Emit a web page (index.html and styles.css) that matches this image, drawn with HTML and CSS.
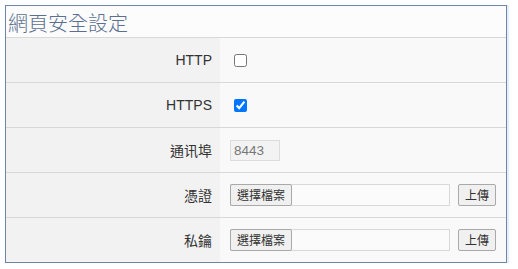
FILE: index.html
```html
<!DOCTYPE html>
<html>
<head>
<meta charset="utf-8">
<link rel="stylesheet" href="styles.css">
</head>
<body>
<div class="panel">
  <div class="title">網頁安全設定</div>
  <div class="row">
    <div class="label">HTTP</div>
    <div class="value"><input type="checkbox" class="chk"></div>
  </div>
  <div class="row">
    <div class="label">HTTPS</div>
    <div class="value"><input type="checkbox" class="chk" checked></div>
  </div>
  <div class="row">
    <div class="label">通讯埠</div>
    <div class="value"><div class="port">8443</div></div>
  </div>
  <div class="row">
    <div class="label">憑證</div>
    <div class="value">
      <div class="file"><span class="pick">選擇檔案</span></div>
      <span class="upload">上傳</span>
    </div>
  </div>
  <div class="row last">
    <div class="label">私鑰</div>
    <div class="value">
      <div class="file"><span class="pick">選擇檔案</span></div>
      <span class="upload">上傳</span>
    </div>
  </div>
</div>
</body>
</html>
```

FILE: styles.css
```css
html, body {
  margin: 0;
  padding: 0;
  background: #ffffff;
}
body {
  padding: 5px 0 0 5px;
  font-family: "Liberation Sans", Arial, "Noto Sans CJK TC", sans-serif;
  color: #333333;
}
.panel {
  width: 500px;
  border: 1px solid #6f87a6;
  box-shadow: 2px 0 0 #e4eefa;
  background: #fcfcfc;
}
.title {
  height: 31px;
  line-height: 33px;
  padding-left: 2px;
  font-size: 20px;
  color: #5b6f8e;
  border-bottom: 1px solid #d8d8d8;
  font-family: "Noto Sans CJK TC", sans-serif;
  font-weight: 300;
}
.row {
  display: flex;
  height: 44px;
  border-bottom: 1px solid #d8d8d8;
}
.row.last {
  border-bottom: none;
}
.label {
  width: 206px;
  padding-right: 8px;
  background: #f2f2f2;
  display: flex;
  align-items: center;
  justify-content: flex-end;
  font-size: 14px;
  font-family: "Liberation Sans", Arial, "Noto Sans CJK TC", sans-serif;
}
.value {
  flex: 1;
  background: #f9f9f9;
  display: flex;
  align-items: center;
  padding-left: 10px;
}
.chk {
  margin: 0 0 0 4px;
  width: 13px;
  height: 13px;
}
.port {
  box-sizing: border-box;
  width: 50px;
  height: 21px;
  border: 1px solid #dcdcdc;
  background: #f3f3f3;
  color: #777777;
  font-size: 13.5px;
  line-height: 19px;
  padding-left: 3px;
}
.file {
  box-sizing: border-box;
  width: 220px;
  height: 22px;
  border: 1px solid #d9d9d9;
  background: #fbfbfb;
  display: flex;
}
.pick {
  box-sizing: border-box;
  width: 62px;
  height: 22px;
  margin: -1px 0 0 -1px;
  border: 1px solid #a9a9a9;
  border-radius: 2px;
  background: #f0f0f0;
  font-size: 12px;
  line-height: 20px;
  text-align: center;
  color: #333;
  font-family: "Noto Sans CJK TC", sans-serif;
}
.upload {
  box-sizing: border-box;
  margin-left: 8px;
  width: 38px;
  height: 22px;
  border: 1px solid #a9a9a9;
  border-radius: 2px;
  background: #f0f0f0;
  font-size: 12px;
  line-height: 20px;
  text-align: center;
  color: #333;
  font-family: "Noto Sans CJK TC", sans-serif;
}
```
